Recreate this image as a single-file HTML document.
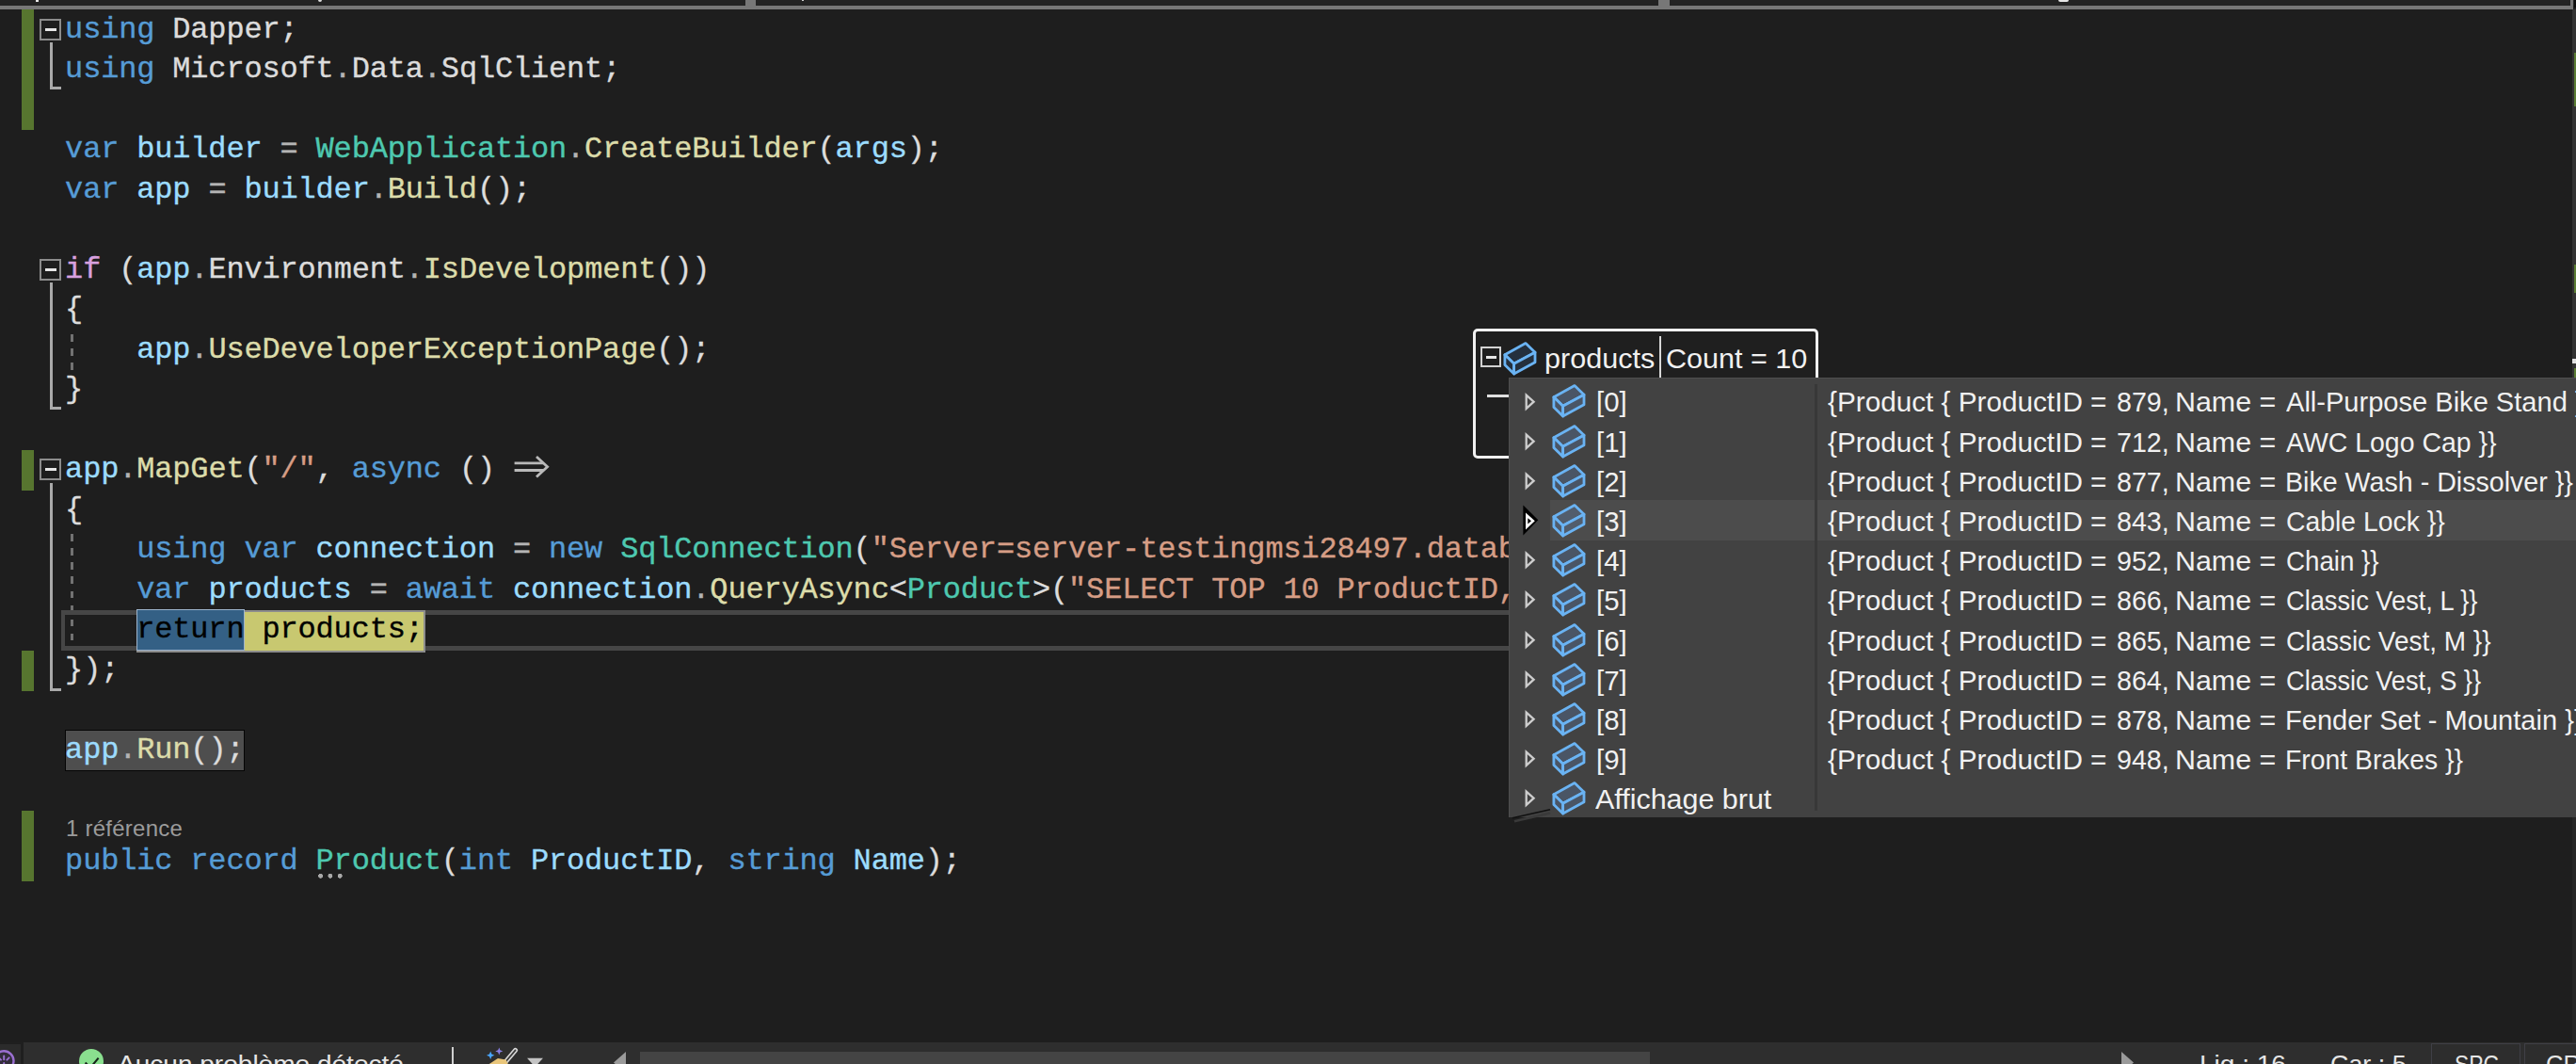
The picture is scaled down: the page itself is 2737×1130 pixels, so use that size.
<!DOCTYPE html>
<html><head><meta charset="utf-8"><title>Program.cs</title>
<style>
html,body{margin:0;padding:0;background:#1e1e1e;}
body{width:2737px;height:1130px;position:relative;overflow:hidden;font-family:"Liberation Sans",sans-serif;}
.a{position:absolute;}
.ln{position:absolute;left:69.1px;height:42.5px;line-height:42.5px;white-space:pre;font-family:"Liberation Mono",monospace;font-size:32px;letter-spacing:-0.170px;color:#dcdcdc;}
.ln span{position:relative;top:0.4px;-webkit-text-stroke:0.35px currentColor;}
.k{color:#569cd6;}
.l{color:#9cdcfe;}
.t{color:#4ec9b0;}
.m{color:#dcdcaa;}
.s{color:#d69d85;}
.c{color:#d8a0df;}
.p{color:#dcdcdc;}
.o{color:#b4b4b4;}
.b{color:#000000;}
.gb{position:absolute;left:23px;width:13px;background:#57752f;}
.cb{position:absolute;left:42px;width:19px;height:19px;border:2px solid #8c8c8c;background:#1e1e1e;}
.cb i{position:absolute;left:3.5px;top:8px;width:12.5px;height:3px;background:#e6e6e6;}
.vl{position:absolute;left:53.2px;width:3px;background:#a9a9a9;}
.hl{position:absolute;left:53.2px;width:11.6px;height:2.9px;background:#a9a9a9;}
.dg{position:absolute;left:75.2px;width:2.8px;background:repeating-linear-gradient(to bottom,transparent 0,transparent 4.3px,#727272 4.3px,#727272 11.9px,transparent 11.9px,transparent 15.05px);}
.sb{font-family:"Liberation Sans",sans-serif;color:#e4e4e4;white-space:pre;}
.tx{white-space:pre;transform-origin:0 0;}
</style></head><body>
<div class="a" style="left:0;top:0;width:2737px;height:6px;background:#232323"></div>
<div class="a" style="left:38.2px;top:0;width:2.4px;height:1.8px;background:#e8e8e8"></div>
<div class="a" style="left:337.8px;top:0;width:4.6px;height:1.8px;background:#dcdcdc;border-radius:0 0 2px 2px"></div>
<div class="a" style="left:851.5px;top:0;width:2px;height:1.2px;background:#cfcfcf"></div>
<div class="a" style="left:2187px;top:0;width:11px;height:2px;background:#e4e4e4;border-radius:0 0 5px 5px"></div>
<div class="a" style="left:0;top:6px;width:2733px;height:4px;background:#777777"></div>
<div class="a" style="left:792px;top:0;width:11px;height:10px;background:#777777"></div>
<div class="a" style="left:1762px;top:0;width:11.5px;height:10px;background:#777777"></div>
<div class="a" style="left:2731px;top:0;width:3px;height:10px;background:#777777"></div>
<div class="a" style="left:2735px;top:0;width:2px;height:8px;background:#0c0c0c"></div>
<div class="a" style="left:2733px;top:10px;width:4px;height:392px;background:#333333"></div>
<div class="a" style="left:2733px;top:868px;width:4px;height:239px;background:#262626"></div>
<div class="a" style="left:2735px;top:56px;width:2px;height:57px;background:#5b7c34"></div>
<div class="a" style="left:2735px;top:281px;width:2px;height:30px;background:#5b7c34"></div>
<div class="a" style="left:2733px;top:380.5px;width:4px;height:5px;background:#e0e0e0"></div>
<div class="a" style="left:2735px;top:391px;width:2px;height:10px;background:#5b7c34"></div>
<div class="gb" style="top:10px;height:127.5px"></div>
<div class="gb" style="top:478.4px;height:42.9px"></div>
<div class="gb" style="top:690.9px;height:42.9px"></div>
<div class="gb" style="top:860.9px;height:74.8px"></div>
<div class="cb" style="top:19.9px"><i></i></div>
<div class="vl" style="top:45.0px;height:50.0px"></div>
<div class="hl" style="top:92.2px"></div>
<div class="cb" style="top:274.9px"><i></i></div>
<div class="vl" style="top:300.0px;height:134.8px"></div>
<div class="hl" style="top:432.0px"></div>
<div class="cb" style="top:487.4px"><i></i></div>
<div class="vl" style="top:512.5px;height:221.5px"></div>
<div class="hl" style="top:731.2px"></div>
<div class="dg" style="top:350.5px;height:42.5px"></div>
<div class="dg" style="top:563.0px;height:127.5px"></div>
<div class="a" style="left:65.2px;top:648px;width:2700px;height:32.5px;border:5px solid #464646;border-left-width:4px"></div>
<div class="a" style="left:145.2px;top:648px;width:302.5px;height:40.5px;border:2px solid #8c8c8c;background:#c8c870;box-sizing:content-box"></div>
<div class="a" style="left:145.2px;top:647px;width:112.7px;height:42px;border:1px solid #9db4cc;background:#346085;"></div>
<div class="a" style="left:68.5px;top:775.0px;width:189.3px;height:41.5px;border:1.5px solid #050505;background:#4e4e4e;"></div>
<div class="ln" style="top:10.5px"><span class="k">using</span><span class="p"> Dapper;</span></div>
<div class="ln" style="top:53.0px"><span class="k">using</span><span class="p"> Microsoft</span><span class="o">.</span><span class="p">Data</span><span class="o">.</span><span class="p">SqlClient;</span></div>
<div class="ln" style="top:138.0px"><span class="k">var</span><span class="l"> builder</span><span class="o"> = </span><span class="t">WebApplication</span><span class="o">.</span><span class="m">CreateBuilder</span><span class="p">(</span><span class="l">args</span><span class="p">);</span></div>
<div class="ln" style="top:180.5px"><span class="k">var</span><span class="l"> app</span><span class="o"> = </span><span class="l">builder</span><span class="o">.</span><span class="m">Build</span><span class="p">();</span></div>
<div class="ln" style="top:265.5px"><span class="c">if</span><span class="p"> (</span><span class="l">app</span><span class="o">.</span><span class="p">Environment</span><span class="o">.</span><span class="m">IsDevelopment</span><span class="p">())</span></div>
<div class="ln" style="top:308.0px"><span class="p">{</span></div>
<div class="ln" style="top:350.5px"><span class="p">    </span><span class="l">app</span><span class="o">.</span><span class="m">UseDeveloperExceptionPage</span><span class="p">();</span></div>
<div class="ln" style="top:393.0px"><span class="p">}</span></div>
<div class="ln" style="top:478.0px"><span class="l">app</span><span class="o">.</span><span class="m">MapGet</span><span class="p">(</span><span class="s">"/"</span><span class="p">, </span><span class="k">async</span><span class="p"> () </span></div>
<div class="ln" style="top:520.5px"><span class="p">{</span></div>
<div class="ln" style="top:563.0px"><span class="p">    </span><span class="k">using var</span><span class="l"> connection</span><span class="o"> = </span><span class="k">new</span><span class="t"> SqlConnection</span><span class="p">(</span><span class="s">"Server=server-testingmsi28497.database.windows.net;</span></div>
<div class="ln" style="top:605.5px"><span class="p">    </span><span class="k">var</span><span class="l"> products</span><span class="o"> = </span><span class="k">await</span><span class="l"> connection</span><span class="o">.</span><span class="m">QueryAsync</span><span class="p">&lt;</span><span class="t">Product</span><span class="p">&gt;(</span><span class="s">"SELECT TOP 10 ProductID, Name</span></div>
<div class="ln" style="top:648.0px"><span class="b">    return products;</span></div>
<div class="ln" style="top:690.5px"><span class="p">});</span></div>
<div class="ln" style="top:775.5px"><span class="l">app</span><span class="o">.</span><span class="m">Run</span><span class="p">();</span></div>
<div class="ln" style="top:893.5px"><span class="k">public record </span><span class="t">Product</span><span class="p">(</span><span class="k">int</span><span class="l"> ProductID</span><span class="p">, </span><span class="k">string</span><span class="l"> Name</span><span class="p">);</span></div>
<svg class="a" style="left:544.9px;top:478.0px" width="40" height="43" viewBox="0 0 40 43"><g fill="none" stroke="#b9b9b9" stroke-width="2.8"><path d="M1.6 13.9H32M1.6 21.5H32"/><path d="M25 7L36.6 17.7L25 28.5" stroke-linejoin="miter"/></g></svg>
<div class="a" style="left:70px;top:863.1px;font-size:24px;line-height:33px;letter-spacing:0.25px;color:#9b9b9b;white-space:pre" id="cl">1 référence</div>
<div class="a" style="left:337.5px;top:928.1px;width:26px;height:4.5px;background:radial-gradient(circle at 2.6px 2.25px,#a8a8a8 2.2px,transparent 2.7px),radial-gradient(circle at 12.9px 2.25px,#a8a8a8 2.2px,transparent 2.7px),radial-gradient(circle at 23.2px 2.25px,#a8a8a8 2.2px,transparent 2.7px)"></div>
<div class="a" style="left:1565.2px;top:349.3px;width:361px;height:131.4px;border:3px solid #f0f0f0;border-radius:5px;background:#1f1f1f"></div>
<div class="a" style="left:1573px;top:368px;width:18px;height:18px;border:2.5px solid #d2d2d2;"></div>
<div class="a" style="left:1579px;top:377.7px;width:11px;height:3px;background:#e8e8e8"></div>
<svg class="a" style="left:1597.4px;top:361.7px" width="36" height="37" viewBox="0 0 36 37"><g stroke="#6ab3f3" stroke-width="2.8" stroke-linejoin="round" fill="#24303e"><path d="M24 2.6L1.9 14.8L11.6 24.3L34 12.2Z"/><path d="M1.9 14.8V25.6L11.6 35V24.3Z"/><path d="M11.6 24.3V35L34 22.8V12.2Z"/></g></svg>
<div class="a" style="left:1763px;top:356.8px;width:2.4px;height:46px;background:#d8d8d8"></div>
<div class="a" style="left:1580.3px;top:419.2px;width:24px;height:2.8px;background:#e0e0e0"></div>
<div class="a" style="left:1602.8px;top:401.3px;width:1134.2px;height:466.8px;background:#424242;box-shadow:inset 1.2px 1px 0 #4e4e4e"></div>
<div class="a" style="left:1647px;top:531.0px;width:1100px;height:42.8px;background:#4c4c4c"></div>
<div class="a" style="left:1927.6px;top:408px;width:3.2px;height:452.8px;background:#383838"></div>
<svg class="a" style="left:1619px;top:416.5px" width="14" height="20" viewBox="0 0 14 20"><path d="M2.7 2.6V16.8L10.6 9.7Z" fill="none" stroke="#cdcdcd" stroke-width="2.3" stroke-linejoin="miter"/></svg>
<svg class="a" style="left:1649.2px;top:407.4px" width="36" height="37" viewBox="0 0 36 37"><g stroke="#6ab3f3" stroke-width="2.8" stroke-linejoin="round" fill="#4a5565"><path d="M24 2.6L1.9 14.8L11.6 24.3L34 12.2Z"/><path d="M1.9 14.8V25.6L11.6 35V24.3Z"/><path d="M11.6 24.3V35L34 22.8V12.2Z"/></g></svg>
<svg class="a" style="left:1619px;top:458.7px" width="14" height="20" viewBox="0 0 14 20"><path d="M2.7 2.6V16.8L10.6 9.7Z" fill="none" stroke="#cdcdcd" stroke-width="2.3" stroke-linejoin="miter"/></svg>
<svg class="a" style="left:1649.2px;top:449.6px" width="36" height="37" viewBox="0 0 36 37"><g stroke="#6ab3f3" stroke-width="2.8" stroke-linejoin="round" fill="#4a5565"><path d="M24 2.6L1.9 14.8L11.6 24.3L34 12.2Z"/><path d="M1.9 14.8V25.6L11.6 35V24.3Z"/><path d="M11.6 24.3V35L34 22.8V12.2Z"/></g></svg>
<svg class="a" style="left:1619px;top:500.9px" width="14" height="20" viewBox="0 0 14 20"><path d="M2.7 2.6V16.8L10.6 9.7Z" fill="none" stroke="#cdcdcd" stroke-width="2.3" stroke-linejoin="miter"/></svg>
<svg class="a" style="left:1649.2px;top:491.8px" width="36" height="37" viewBox="0 0 36 37"><g stroke="#6ab3f3" stroke-width="2.8" stroke-linejoin="round" fill="#4a5565"><path d="M24 2.6L1.9 14.8L11.6 24.3L34 12.2Z"/><path d="M1.9 14.8V25.6L11.6 35V24.3Z"/><path d="M11.6 24.3V35L34 22.8V12.2Z"/></g></svg>
<svg class="a" style="left:1616px;top:535.0px" width="22" height="36" viewBox="0 0 22 36"><path d="M2.4 1.5V33.5L18.3 17.2Z" fill="#000"/><path d="M5 9.5V27.5L14.8 18.2Z" fill="#fff"/><path d="M7.3 15.2V21.4L11 18.2Z" fill="#000"/></svg>
<svg class="a" style="left:1649.2px;top:533.9px" width="36" height="37" viewBox="0 0 36 37"><g stroke="#6ab3f3" stroke-width="2.8" stroke-linejoin="round" fill="#525d6c"><path d="M24 2.6L1.9 14.8L11.6 24.3L34 12.2Z"/><path d="M1.9 14.8V25.6L11.6 35V24.3Z"/><path d="M11.6 24.3V35L34 22.8V12.2Z"/></g></svg>
<svg class="a" style="left:1619px;top:585.2px" width="14" height="20" viewBox="0 0 14 20"><path d="M2.7 2.6V16.8L10.6 9.7Z" fill="none" stroke="#cdcdcd" stroke-width="2.3" stroke-linejoin="miter"/></svg>
<svg class="a" style="left:1649.2px;top:576.1px" width="36" height="37" viewBox="0 0 36 37"><g stroke="#6ab3f3" stroke-width="2.8" stroke-linejoin="round" fill="#4a5565"><path d="M24 2.6L1.9 14.8L11.6 24.3L34 12.2Z"/><path d="M1.9 14.8V25.6L11.6 35V24.3Z"/><path d="M11.6 24.3V35L34 22.8V12.2Z"/></g></svg>
<svg class="a" style="left:1619px;top:627.4px" width="14" height="20" viewBox="0 0 14 20"><path d="M2.7 2.6V16.8L10.6 9.7Z" fill="none" stroke="#cdcdcd" stroke-width="2.3" stroke-linejoin="miter"/></svg>
<svg class="a" style="left:1649.2px;top:618.3px" width="36" height="37" viewBox="0 0 36 37"><g stroke="#6ab3f3" stroke-width="2.8" stroke-linejoin="round" fill="#4a5565"><path d="M24 2.6L1.9 14.8L11.6 24.3L34 12.2Z"/><path d="M1.9 14.8V25.6L11.6 35V24.3Z"/><path d="M11.6 24.3V35L34 22.8V12.2Z"/></g></svg>
<svg class="a" style="left:1619px;top:669.6px" width="14" height="20" viewBox="0 0 14 20"><path d="M2.7 2.6V16.8L10.6 9.7Z" fill="none" stroke="#cdcdcd" stroke-width="2.3" stroke-linejoin="miter"/></svg>
<svg class="a" style="left:1649.2px;top:660.5px" width="36" height="37" viewBox="0 0 36 37"><g stroke="#6ab3f3" stroke-width="2.8" stroke-linejoin="round" fill="#4a5565"><path d="M24 2.6L1.9 14.8L11.6 24.3L34 12.2Z"/><path d="M1.9 14.8V25.6L11.6 35V24.3Z"/><path d="M11.6 24.3V35L34 22.8V12.2Z"/></g></svg>
<svg class="a" style="left:1619px;top:711.8px" width="14" height="20" viewBox="0 0 14 20"><path d="M2.7 2.6V16.8L10.6 9.7Z" fill="none" stroke="#cdcdcd" stroke-width="2.3" stroke-linejoin="miter"/></svg>
<svg class="a" style="left:1649.2px;top:702.7px" width="36" height="37" viewBox="0 0 36 37"><g stroke="#6ab3f3" stroke-width="2.8" stroke-linejoin="round" fill="#4a5565"><path d="M24 2.6L1.9 14.8L11.6 24.3L34 12.2Z"/><path d="M1.9 14.8V25.6L11.6 35V24.3Z"/><path d="M11.6 24.3V35L34 22.8V12.2Z"/></g></svg>
<svg class="a" style="left:1619px;top:753.9px" width="14" height="20" viewBox="0 0 14 20"><path d="M2.7 2.6V16.8L10.6 9.7Z" fill="none" stroke="#cdcdcd" stroke-width="2.3" stroke-linejoin="miter"/></svg>
<svg class="a" style="left:1649.2px;top:744.8px" width="36" height="37" viewBox="0 0 36 37"><g stroke="#6ab3f3" stroke-width="2.8" stroke-linejoin="round" fill="#4a5565"><path d="M24 2.6L1.9 14.8L11.6 24.3L34 12.2Z"/><path d="M1.9 14.8V25.6L11.6 35V24.3Z"/><path d="M11.6 24.3V35L34 22.8V12.2Z"/></g></svg>
<svg class="a" style="left:1619px;top:796.1px" width="14" height="20" viewBox="0 0 14 20"><path d="M2.7 2.6V16.8L10.6 9.7Z" fill="none" stroke="#cdcdcd" stroke-width="2.3" stroke-linejoin="miter"/></svg>
<svg class="a" style="left:1649.2px;top:787.0px" width="36" height="37" viewBox="0 0 36 37"><g stroke="#6ab3f3" stroke-width="2.8" stroke-linejoin="round" fill="#4a5565"><path d="M24 2.6L1.9 14.8L11.6 24.3L34 12.2Z"/><path d="M1.9 14.8V25.6L11.6 35V24.3Z"/><path d="M11.6 24.3V35L34 22.8V12.2Z"/></g></svg>
<svg class="a" style="left:1619px;top:838.3px" width="14" height="20" viewBox="0 0 14 20"><path d="M2.7 2.6V16.8L10.6 9.7Z" fill="none" stroke="#cdcdcd" stroke-width="2.3" stroke-linejoin="miter"/></svg>
<svg class="a" style="left:1649.2px;top:829.2px" width="36" height="37" viewBox="0 0 36 37"><g stroke="#6ab3f3" stroke-width="2.8" stroke-linejoin="round" fill="#4a5565"><path d="M24 2.6L1.9 14.8L11.6 24.3L34 12.2Z"/><path d="M1.9 14.8V25.6L11.6 35V24.3Z"/><path d="M11.6 24.3V35L34 22.8V12.2Z"/></g></svg>
<svg class="a" style="left:1604px;top:856px" width="48" height="18" viewBox="0 0 48 18"><path d="M3 12.8L43 3.8" stroke="#101010" stroke-width="1.6"/><path d="M5 16.2L43 7.6" stroke="#3a3a3a" stroke-width="2.6"/></svg>
<div class="a tx" style="left:1640.9px;top:361.5px;font-size:29.5px;line-height:38.4px;color:#f1f1f1;transform:scaleX(1.0359)">products</div>
<div class="a tx" style="left:1769.5px;top:361.5px;font-size:29.5px;line-height:38.4px;color:#f1f1f1;transform:scaleX(1.0352)">Count = 10</div>
<div class="a tx" style="left:1695.5px;top:408.4px;font-size:29.5px;line-height:38.4px;color:#f1f1f1;transform:scaleX(0.9965)">[0]</div>
<div class="a tx" style="left:1942.3px;top:408.4px;font-size:29.5px;line-height:38.4px;color:#f1f1f1;transform:scaleX(1.0071)">{Product { ProductID =</div>
<div class="a tx" style="left:2248.5px;top:408.4px;font-size:29.5px;line-height:38.4px;color:#f1f1f1;transform:scaleX(0.9683)">879,</div>
<div class="a tx" style="left:2310.9px;top:408.4px;font-size:29.5px;line-height:38.4px;color:#f1f1f1;transform:scaleX(1.0299)">Name =</div>
<div class="a tx" style="left:2428.9px;top:408.4px;font-size:29.5px;line-height:38.4px;color:#f1f1f1;transform:scaleX(0.9850)">All-Purpose Bike Stand }}</div>
<div class="a tx" style="left:1695.5px;top:450.6px;font-size:29.5px;line-height:38.4px;color:#f1f1f1;transform:scaleX(0.9965)">[1]</div>
<div class="a tx" style="left:1942.3px;top:450.6px;font-size:29.5px;line-height:38.4px;color:#f1f1f1;transform:scaleX(1.0071)">{Product { ProductID =</div>
<div class="a tx" style="left:2248.5px;top:450.6px;font-size:29.5px;line-height:38.4px;color:#f1f1f1;transform:scaleX(0.9683)">712,</div>
<div class="a tx" style="left:2310.9px;top:450.6px;font-size:29.5px;line-height:38.4px;color:#f1f1f1;transform:scaleX(1.0299)">Name =</div>
<div class="a tx" style="left:2428.9px;top:450.6px;font-size:29.5px;line-height:38.4px;color:#f1f1f1;transform:scaleX(0.9642)">AWC Logo Cap }}</div>
<div class="a tx" style="left:1695.5px;top:492.7px;font-size:29.5px;line-height:38.4px;color:#f1f1f1;transform:scaleX(0.9965)">[2]</div>
<div class="a tx" style="left:1942.3px;top:492.7px;font-size:29.5px;line-height:38.4px;color:#f1f1f1;transform:scaleX(1.0071)">{Product { ProductID =</div>
<div class="a tx" style="left:2248.5px;top:492.7px;font-size:29.5px;line-height:38.4px;color:#f1f1f1;transform:scaleX(0.9683)">877,</div>
<div class="a tx" style="left:2310.9px;top:492.7px;font-size:29.5px;line-height:38.4px;color:#f1f1f1;transform:scaleX(1.0299)">Name =</div>
<div class="a tx" style="left:2427.7px;top:492.7px;font-size:29.5px;line-height:38.4px;color:#f1f1f1;transform:scaleX(0.9701)">Bike Wash - Dissolver }}</div>
<div class="a tx" style="left:1695.5px;top:534.9px;font-size:29.5px;line-height:38.4px;color:#f1f1f1;transform:scaleX(0.9965)">[3]</div>
<div class="a tx" style="left:1942.3px;top:534.9px;font-size:29.5px;line-height:38.4px;color:#f1f1f1;transform:scaleX(1.0071)">{Product { ProductID =</div>
<div class="a tx" style="left:2248.5px;top:534.9px;font-size:29.5px;line-height:38.4px;color:#f1f1f1;transform:scaleX(0.9683)">843,</div>
<div class="a tx" style="left:2310.9px;top:534.9px;font-size:29.5px;line-height:38.4px;color:#f1f1f1;transform:scaleX(1.0299)">Name =</div>
<div class="a tx" style="left:2428.6px;top:534.9px;font-size:29.5px;line-height:38.4px;color:#f1f1f1;transform:scaleX(0.9609)">Cable Lock }}</div>
<div class="a tx" style="left:1695.5px;top:577.1px;font-size:29.5px;line-height:38.4px;color:#f1f1f1;transform:scaleX(0.9965)">[4]</div>
<div class="a tx" style="left:1942.3px;top:577.1px;font-size:29.5px;line-height:38.4px;color:#f1f1f1;transform:scaleX(1.0071)">{Product { ProductID =</div>
<div class="a tx" style="left:2248.5px;top:577.1px;font-size:29.5px;line-height:38.4px;color:#f1f1f1;transform:scaleX(0.9683)">952,</div>
<div class="a tx" style="left:2310.9px;top:577.1px;font-size:29.5px;line-height:38.4px;color:#f1f1f1;transform:scaleX(1.0299)">Name =</div>
<div class="a tx" style="left:2428.7px;top:577.1px;font-size:29.5px;line-height:38.4px;color:#f1f1f1;transform:scaleX(0.9392)">Chain }}</div>
<div class="a tx" style="left:1695.5px;top:619.3px;font-size:29.5px;line-height:38.4px;color:#f1f1f1;transform:scaleX(0.9965)">[5]</div>
<div class="a tx" style="left:1942.3px;top:619.3px;font-size:29.5px;line-height:38.4px;color:#f1f1f1;transform:scaleX(1.0071)">{Product { ProductID =</div>
<div class="a tx" style="left:2248.5px;top:619.3px;font-size:29.5px;line-height:38.4px;color:#f1f1f1;transform:scaleX(0.9683)">866,</div>
<div class="a tx" style="left:2310.9px;top:619.3px;font-size:29.5px;line-height:38.4px;color:#f1f1f1;transform:scaleX(1.0299)">Name =</div>
<div class="a tx" style="left:2428.7px;top:619.3px;font-size:29.5px;line-height:38.4px;color:#f1f1f1;transform:scaleX(0.9233)">Classic Vest, L }}</div>
<div class="a tx" style="left:1695.5px;top:661.5px;font-size:29.5px;line-height:38.4px;color:#f1f1f1;transform:scaleX(0.9965)">[6]</div>
<div class="a tx" style="left:1942.3px;top:661.5px;font-size:29.5px;line-height:38.4px;color:#f1f1f1;transform:scaleX(1.0071)">{Product { ProductID =</div>
<div class="a tx" style="left:2248.5px;top:661.5px;font-size:29.5px;line-height:38.4px;color:#f1f1f1;transform:scaleX(0.9683)">865,</div>
<div class="a tx" style="left:2310.9px;top:661.5px;font-size:29.5px;line-height:38.4px;color:#f1f1f1;transform:scaleX(1.0299)">Name =</div>
<div class="a tx" style="left:2428.7px;top:661.5px;font-size:29.5px;line-height:38.4px;color:#f1f1f1;transform:scaleX(0.9476)">Classic Vest, M }}</div>
<div class="a tx" style="left:1695.5px;top:703.6px;font-size:29.5px;line-height:38.4px;color:#f1f1f1;transform:scaleX(0.9965)">[7]</div>
<div class="a tx" style="left:1942.3px;top:703.6px;font-size:29.5px;line-height:38.4px;color:#f1f1f1;transform:scaleX(1.0071)">{Product { ProductID =</div>
<div class="a tx" style="left:2248.5px;top:703.6px;font-size:29.5px;line-height:38.4px;color:#f1f1f1;transform:scaleX(0.9683)">864,</div>
<div class="a tx" style="left:2310.9px;top:703.6px;font-size:29.5px;line-height:38.4px;color:#f1f1f1;transform:scaleX(1.0299)">Name =</div>
<div class="a tx" style="left:2428.7px;top:703.6px;font-size:29.5px;line-height:38.4px;color:#f1f1f1;transform:scaleX(0.9214)">Classic Vest, S }}</div>
<div class="a tx" style="left:1695.5px;top:745.8px;font-size:29.5px;line-height:38.4px;color:#f1f1f1;transform:scaleX(0.9965)">[8]</div>
<div class="a tx" style="left:1942.3px;top:745.8px;font-size:29.5px;line-height:38.4px;color:#f1f1f1;transform:scaleX(1.0071)">{Product { ProductID =</div>
<div class="a tx" style="left:2248.5px;top:745.8px;font-size:29.5px;line-height:38.4px;color:#f1f1f1;transform:scaleX(0.9683)">878,</div>
<div class="a tx" style="left:2310.9px;top:745.8px;font-size:29.5px;line-height:38.4px;color:#f1f1f1;transform:scaleX(1.0299)">Name =</div>
<div class="a tx" style="left:2427.6px;top:745.8px;font-size:29.5px;line-height:38.4px;color:#f1f1f1;transform:scaleX(0.9850)">Fender Set - Mountain }}</div>
<div class="a tx" style="left:1695.5px;top:788.0px;font-size:29.5px;line-height:38.4px;color:#f1f1f1;transform:scaleX(0.9965)">[9]</div>
<div class="a tx" style="left:1942.3px;top:788.0px;font-size:29.5px;line-height:38.4px;color:#f1f1f1;transform:scaleX(1.0071)">{Product { ProductID =</div>
<div class="a tx" style="left:2248.5px;top:788.0px;font-size:29.5px;line-height:38.4px;color:#f1f1f1;transform:scaleX(0.9683)">948,</div>
<div class="a tx" style="left:2310.9px;top:788.0px;font-size:29.5px;line-height:38.4px;color:#f1f1f1;transform:scaleX(1.0299)">Name =</div>
<div class="a tx" style="left:2427.7px;top:788.0px;font-size:29.5px;line-height:38.4px;color:#f1f1f1;transform:scaleX(0.9604)">Front Brakes }}</div>
<div class="a tx" style="left:1695.2px;top:830.2px;font-size:29.5px;line-height:38.4px;color:#f1f1f1;transform:scaleX(1.0320)">Affichage brut</div>
<div class="a" style="left:0;top:1107px;width:2737px;height:23px;background:#2e2e2e"></div>
<div class="a" style="left:0;top:1107px;width:25px;height:23px;background:#1f1f1f"></div>
<div class="a" style="left:0;top:1109px;width:22px;height:21px;background:#2b2b2b"></div>
<svg class="a" style="left:0;top:1110px" width="24" height="20" viewBox="0 0 24 20"><circle cx="4.2" cy="16.6" r="10.3" fill="#322d3b" stroke="#9a6fd1" stroke-width="2.4"/><g stroke="#9a6fd1" stroke-width="2" stroke-linecap="round"><path d="M4.2 11.6V15.2M9.6 13.4L7.4 15.6M-1.2 13.4L1 15.6M4.2 19v2"/></g></svg>
<div class="a" style="left:84px;top:1114px;width:26.4px;height:26.4px;background:#8ae08f;border-radius:50%"></div>
<svg class="a" style="left:84px;top:1114px" width="27" height="16" viewBox="0 0 27 16"><path d="M6.6 14.5L12 20L20.6 9.6" stroke="#16241a" stroke-width="2.1" fill="none"/></svg>
<div class="a" style="left:480px;top:1112px;width:2.2px;height:18px;background:#cfcfcf"></div>
<svg class="a" style="left:512px;top:1110px" width="44" height="20" viewBox="0 0 44 20"><path d="M9.2 6.6l1.2 3 3 1.2-3 1.2-1.2 3-1.2-3-3-1.2 3-1.2z" fill="#4aa7ff"/><path d="M18.3 2.4l1.1 2.9 2.9 1.1-2.9 1.1-1.1 2.9-1.1-2.9-2.9-1.1 2.9-1.1z" fill="#8a80e6"/><path d="M35.6 5.4L24.5 18.5" stroke="#d8d8d8" stroke-width="5" stroke-linecap="round"/><path d="M35.6 5.4L24.5 18.5" stroke="#3a3a3a" stroke-width="1.8" stroke-linecap="round"/><path d="M7 20.5L17 14l8.6 1.6L28 20.5Z" fill="#e9c67b"/></svg>
<svg class="a" style="left:558px;top:1122px" width="22" height="8" viewBox="0 0 22 8"><path d="M2 1.8H19L10.5 11Z" fill="#c4c4c4"/></svg>
<svg class="a" style="left:648px;top:1115px" width="20" height="15" viewBox="0 0 20 15"><path d="M17 2V25L4 13.5Z" fill="#9a9a9a"/></svg>
<div class="a" style="left:680px;top:1117px;width:1073px;height:14px;background:#444444"></div>
<svg class="a" style="left:2252px;top:1115px" width="20" height="15" viewBox="0 0 20 15"><path d="M2 2V25L15 13.5Z" fill="#9a9a9a"/></svg>
<div class="a" style="left:2582.5px;top:1107.5px;width:93px;height:30px;border:1.5px solid #3f3f46;background:#2d2d2d"></div>
<div class="a" style="left:2681.8px;top:1107.5px;width:93px;height:30px;border:1.5px solid #3f3f46;background:#2d2d2d"></div>
<div class="a tx" style="left:125.4px;top:1113.7px;font-size:26px;line-height:33.8px;color:#e6e6e6;transform:scaleX(1.0782)">Aucun problème détecté</div>
<div class="a tx" style="left:2336.6px;top:1113.7px;font-size:26px;line-height:33.8px;color:#e6e6e6;transform:scaleX(1.0769)">Lig : 16</div>
<div class="a tx" style="left:2476.3px;top:1113.7px;font-size:26px;line-height:33.8px;color:#e6e6e6;transform:scaleX(1.0331)">Car : 5</div>
<div class="a tx" style="left:2607.6px;top:1113.7px;font-size:26px;line-height:33.8px;color:#e6e6e6;transform:scaleX(0.8784)">SPC</div>
<div class="a tx" style="left:2705.0px;top:1113.7px;font-size:26px;line-height:33.8px;color:#e6e6e6;transform:scaleX(0.9850)">CRLF</div>
</body></html>
